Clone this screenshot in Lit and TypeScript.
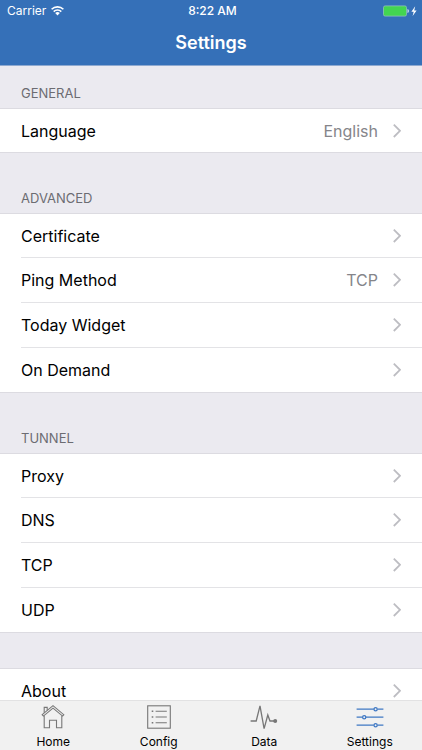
import { LitElement, html, css, svg, nothing } from "lit";
import { customElement, property } from "lit/decorators.js";
import { classMap } from "lit/directives/class-map.js";

interface Row {
  label: string;
  value?: string;
}

interface Section {
  title?: string;
  rows: Row[];
}

const sections: Section[] = [
  { title: "GENERAL", rows: [{ label: "Language", value: "English" }] },
  {
    title: "ADVANCED",
    rows: [
      { label: "Certificate" },
      { label: "Ping Method", value: "TCP" },
      { label: "Today Widget" },
      { label: "On Demand" },
    ],
  },
  {
    title: "TUNNEL",
    rows: [{ label: "Proxy" }, { label: "DNS" }, { label: "TCP" }, { label: "UDP" }],
  },
  { rows: [{ label: "About" }] },
];

const tabs = [
  {
    label: "Home",
    icon: svg`
      <path d="M3.2 10.7 14 1.7l10.8 9-1.2 1.4L14 4.2l-9.6 7.9z" />
      <path d="M5.2 11.8v12h5.3v-7.6h7v7.6h5.3v-12" />
      <path d="M5.2 8.8V3.4h3v2.9" />`,
  },
  {
    label: "Config",
    icon: svg`
      <rect x="2.7" y="1.8" width="22.6" height="22.4" />
      <path d="M10.6 7.3h11.2M10.6 13h11.2M10.6 18.7h11.2" />
      <path d="M6.7 7.3h1.6M6.7 13h1.6M6.7 18.7h1.6" stroke-width="1.6" />`,
  },
  {
    label: "Data",
    icon: svg`
      <path d="M.6 17h5.6L10 1.8l4.1 22.8L17.8 11l2.2 6h4" stroke-width="1.3" />
      <circle cx="25.2" cy="17" r="2" fill="currentColor" stroke="none" />`,
  },
  {
    label: "Settings",
    icon: svg`
      <path d="M.6 5.2h17.2M21.4 5.2h6M.6 13.2h5.8M10 13.2h17.4M.6 21.2h17.2M21.4 21.2h6" stroke-width="1.3" />
      <circle cx="19.6" cy="5.2" r="1.6" stroke-width="1.3" />
      <circle cx="8.2" cy="13.2" r="1.6" stroke-width="1.3" />
      <circle cx="19.6" cy="21.2" r="1.6" stroke-width="1.3" />`,
  },
];

@customElement("status-bar")
class StatusBar extends LitElement {
  static styles = css`
    :host {
      display: grid;
      grid-template-columns: 1fr auto 1fr;
      align-items: center;
      height: 22px;
      padding: 0 4px 0 7px;
      font-size: 12px;
      line-height: 16px;
    }
    .carrier,
    .power {
      display: flex;
      align-items: center;
      gap: 5px;
    }
    .power {
      justify-content: flex-end;
    }
    .time {
      font-weight: 500;
    }
    svg {
      display: block;
    }
  `;

  render() {
    return html`
      <span class="carrier">
        Carrier
        <svg width="13" height="10" viewBox="0 0 13 10" fill="none" stroke="currentColor" stroke-width="1.6" aria-label="Wi-Fi">
          <path d="M.6 3.3a8.4 8.4 0 0 1 11.8 0" />
          <path d="M2.7 5.6a5.4 5.4 0 0 1 7.6 0" />
          <path d="M6.5 9.4 4.2 7.1a3.2 3.2 0 0 1 4.6 0z" fill="currentColor" stroke="none" />
        </svg>
      </span>
      <span class="time">8:22 AM</span>
      <span class="power">
        <svg width="35" height="12" viewBox="0 0 35 12" aria-label="Battery charging">
          <rect x=".5" y=".9" width="23" height="10.2" rx="1.6" fill="#43d551" stroke="#8fc3b8" stroke-width=".8" />
          <path d="M24.4 4c2.2.4 2.2 3.6 0 4z" fill="#b5cde8" />
          <path d="M32.2 1.2 28.4 6.7h2.3l-1.1 4.4 4-5.7h-2.4z" fill="#fff" />
        </svg>
      </span>
    `;
  }
}

@customElement("settings-section")
class SettingsSection extends LitElement {
  @property({ attribute: false }) section!: Section;

  static styles = css`
    :host {
      display: block;
    }
    .title {
      margin: 0;
      padding: 1px 21px 6px;
      color: #6c6c72;
      font-size: 13px;
      font-weight: 400;
      line-height: 18px;
    }
    .rows {
      margin: 0;
      padding: 0;
      list-style: none;
      background: #fff;
      border-top: 1px solid #dcdbe1;
      border-bottom: 1px solid #dcdbe1;
    }
    .item {
      padding-left: 21px;
    }
    .item + .item .row {
      border-top: 1px solid #e3e3e6;
    }
    .row {
      display: flex;
      align-items: center;
      gap: 15px;
      box-sizing: border-box;
      width: 100%;
      height: 45px;
      padding: 0 21px 0 0;
      border: 0;
      background: none;
      color: #000;
      font: inherit;
      text-align: left;
    }
    .item:first-child .row {
      height: 43px;
    }
    .label {
      flex: 1;
    }
    .value {
      color: #85858a;
    }
    .chevron {
      flex: none;
      display: block;
    }
  `;

  render() {
    const { title, rows } = this.section;
    return html`
      ${title ? html`<h2 class="title">${title}</h2>` : nothing}
      <ul class="rows">
        ${rows.map(
          (row) => html`
            <li class="item">
              <button class="row" type="button">
                <span class="label">${row.label}</span>
                ${row.value ? html`<span class="value">${row.value}</span>` : nothing}
                <svg class="chevron" width="8" height="16" viewBox="0 0 8 16" fill="none" stroke="#bdbdc2" stroke-width="1.8" aria-hidden="true">
                  <path d="M.8 1.6 7 7.8.8 14" />
                </svg>
              </button>
            </li>
          `
        )}
      </ul>
    `;
  }
}

@customElement("tab-bar")
class TabBar extends LitElement {
  @property() active = "Settings";

  static styles = css`
    :host {
      display: block;
      background: #f1f1f1;
      border-top: 1px solid #e2e2e3;
    }
    .tabs {
      display: grid;
      grid-template-columns: repeat(4, 1fr);
    }
    .tab {
      display: flex;
      flex-direction: column;
      align-items: center;
      gap: 4px;
      padding: 3px 0 0 1px;
      color: #000;
      font-size: 12px;
      line-height: 16px;
      text-decoration: none;
    }
    .icon {
      display: block;
      color: #777;
    }
    .active .icon {
      color: #3f78c4;
    }
  `;

  render() {
    return html`
      <nav class="tabs">
        ${tabs.map(
          (tab) => html`
            <a class=${classMap({ tab: true, active: tab.label === this.active })} href="#${tab.label.toLowerCase()}">
              <svg class="icon" width="28" height="26" viewBox="0 0 28 26" fill="none" stroke="currentColor" stroke-width="1.1" aria-hidden="true">
                ${tab.icon}
              </svg>
              ${tab.label}
            </a>
          `
        )}
      </nav>
    `;
  }
}

@customElement("app-root")
class AppRoot extends LitElement {
  static styles = css`
    :host {
      display: flex;
      flex-direction: column;
      height: 100vh;
      background: #ebeaf0;
      font-family: Inter, "Liberation Sans", sans-serif;
      font-size: 16px;
      line-height: 22px;
    }
    .header {
      flex: none;
      background: #3570b8;
      border-bottom: 1px solid #8ea9d0;
      color: #fff;
    }
    .heading {
      margin: 0;
      padding: 9px 0 10px;
      font-size: 18px;
      font-weight: 600;
      line-height: 24px;
      text-align: center;
    }
    .content {
      flex: 1;
      min-height: 0;
      display: flex;
      flex-direction: column;
      gap: 35px;
      padding-top: 17px;
      overflow-y: auto;
      scrollbar-width: none;
    }
    .section {
      flex: none;
    }
    .tab-bar {
      flex: none;
    }
  `;

  render() {
    return html`
      <header class="header">
        <status-bar></status-bar>
        <h1 class="heading">Settings</h1>
      </header>
      <main class="content">
        ${sections.map((section) => html`<settings-section class="section" .section=${section}></settings-section>`)}
      </main>
      <tab-bar class="tab-bar"></tab-bar>
    `;
  }
}
